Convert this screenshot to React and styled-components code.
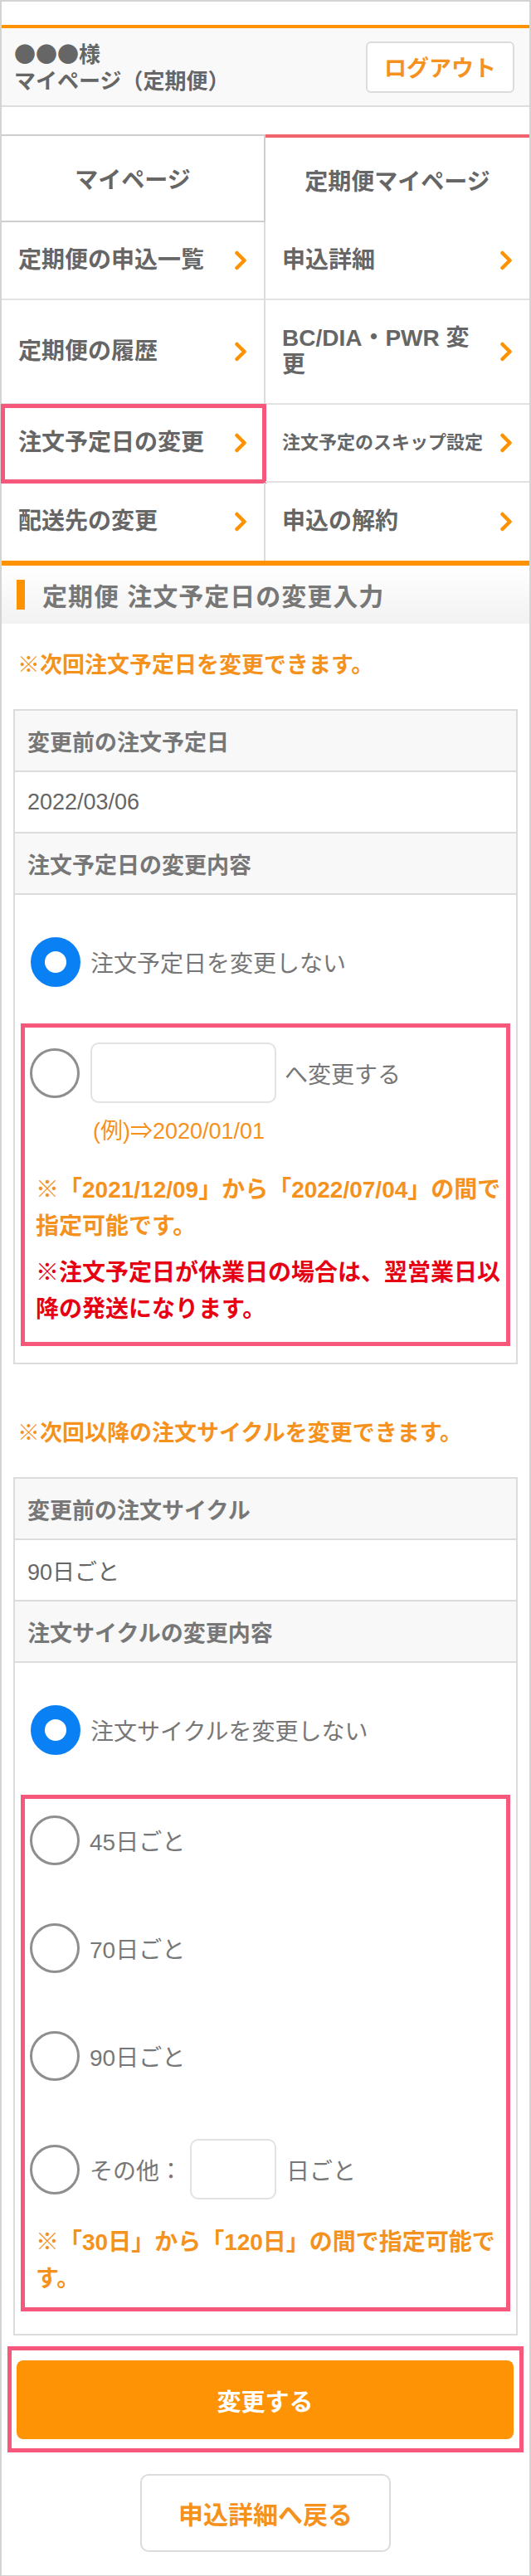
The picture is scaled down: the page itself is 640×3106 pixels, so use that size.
import React from "react";
import styled, { createGlobalStyle } from "styled-components";

const ORANGE = "#ff9200";
const ORANGE_TEXT = "#f5921e";
const PINK = "#f5587b";
const JP = `"Noto Sans CJK JP", sans-serif`;

const GlobalStyle = createGlobalStyle`
  * { box-sizing: border-box; }
  body {
    margin: 0;
    background: #fff;
    font-family: "Liberation Sans", "Noto Sans CJK JP", sans-serif;
    color: #666;
  }
`;

const Page = styled.div`
  width: 640px;
  border: 2px solid #d4d4d4;
  padding: 28px 0 28px;
`;

const Header = styled.header`
  height: 99px;
  border-top: 4px solid ${ORANGE};
  border-bottom: 2px solid #dedede;
  background: #f9f9f9;
  display: flex;
  align-items: center;
  justify-content: space-between;
  padding: 0 18px 0 15px;
`;

const UserName = styled.div`
  font-size: 26px;
  line-height: 32px;
  font-weight: bold;
  color: #666;
`;

const Dots = styled.span`
  font-family: ${JP};
`;

const LogoutButton = styled.button`
  width: 179px;
  height: 62px;
  background: #fff;
  border: 2px solid #dcdcdc;
  border-radius: 6px;
  color: ${ORANGE_TEXT};
  font-family: inherit;
  font-size: 27px;
  font-weight: bold;
  cursor: pointer;
`;

const Tabs = styled.div`
  margin-top: 33px;
  display: grid;
  grid-template-columns: 1fr 1fr;
  height: 106px;
`;

const Tab = styled.div`
  display: flex;
  align-items: center;
  justify-content: center;
  font-size: 28px;
  font-weight: bold;
  color: #666;
  background: #fff;
  border-top: ${(p) => (p.$active ? `4px solid #f0646e` : "2px solid #cfcfcf")};
  border-right: ${(p) => (p.$active ? "none" : "2px solid #cfcfcf")};
  border-bottom: ${(p) => (p.$active ? "none" : "2px solid #cfcfcf")};
`;

const Menu = styled.nav`
  display: grid;
  grid-template-columns: 1fr 1fr;
  border-bottom: 6px solid ${ORANGE};
`;

const MenuCell = styled.a`
  display: flex;
  align-items: center;
  justify-content: space-between;
  gap: 10px;
  padding: 30px 20px;
  min-height: 94px;
  border-bottom: 2px solid #e2e2e2;
  color: #666;
  text-decoration: none;
  font-size: ${(p) => (p.$small ? "22px" : "28px")};
  font-weight: bold;
  line-height: 32px;
  outline: ${(p) => (p.$current ? `5px solid ${PINK}` : "none")};
  outline-offset: -4px;

  &:nth-child(odd) {
    border-right: 2px solid #dcdcdc;
  }
  &:nth-last-child(-n + 2) {
    border-bottom: none;
  }
`;

const Chevron = () => (
  <svg width="16" height="24" viewBox="0 0 16 24" style={{ flexShrink: 0 }}>
    <path
      d="M3.5 3 L12.5 12 L3.5 21"
      fill="none"
      stroke={ORANGE}
      strokeWidth="4.5"
      strokeLinecap="round"
      strokeLinejoin="round"
    />
  </svg>
);

const SectionTitle = styled.h2`
  margin: 0;
  height: 70px;
  display: flex;
  align-items: center;
  gap: 21px;
  padding-left: 18px;
  background: linear-gradient(#ffffff, #f2f2f2);
  font-size: 30px;
  font-weight: bold;
  color: #777;
  letter-spacing: 1px;

  &::before {
    content: "";
    width: 10px;
    height: 36px;
    background: ${ORANGE};
  }
`;

const Content = styled.main`
  padding: 0 14px;
`;

const Notice = styled.p`
  margin: ${(p) => p.$mt}px 0 0 5px;
  font-size: 27px;
  line-height: 40px;
  font-weight: bold;
  color: ${ORANGE_TEXT};
`;

const Table = styled.div`
  margin-top: 33px;
  border: 2px solid #dcdcdc;
`;

const HeadCell = styled.div`
  height: 74px;
  display: flex;
  align-items: center;
  padding: 0 15px;
  background: #f8f8f8;
  border-bottom: 2px solid #dcdcdc;
  font-size: 27px;
  font-weight: bold;
  color: #777;
`;

const ValueCell = styled.div`
  height: 74px;
  display: flex;
  align-items: center;
  padding: 0 15px;
  border-bottom: 2px solid #dcdcdc;
  font-size: 27px;
  color: #666;
`;

const OptionCell = styled.div`
  padding: 0 7px ${(p) => p.$pb}px;
`;

const RadioRow = styled.label`
  display: flex;
  align-items: center;
  padding: ${(p) => p.$pt || 0}px 12px ${(p) => p.$pb || 0}px;
  font-size: 28px;
  color: #777;
`;

const InlineRow = styled.label`
  display: flex;
  align-items: center;
  font-size: 28px;
  color: #777;
`;

const Radio = styled.input.attrs({ type: "radio" })`
  appearance: none;
  margin: 0 12px 0 0;
  width: 60px;
  height: 60px;
  flex-shrink: 0;
  border-radius: 50%;
  border: 3px solid #8e8e8e;
  background: #fff;

  &:checked {
    border: 17px solid #0a80f5;
  }
`;

const TextBox = styled.input.attrs({ type: "text" })`
  width: ${(p) => p.$w}px;
  height: 73px;
  margin: 0 ${(p) => p.$mr}px 0 ${(p) => p.$ml}px;
  border: 2px solid #e2e2e2;
  border-radius: 10px;
  background: #fff;
  font-size: 26px;
`;

const PinkBox = styled.div`
  border: 5px solid ${PINK};
  padding: ${(p) => p.$pt}px 4px ${(p) => p.$pb}px 6px;
`;

const Example = styled.div`
  margin: 17px 0 0 76px;
  font-size: 27px;
  line-height: 34px;
  color: ${ORANGE_TEXT};
`;

const BoxNote = styled.p`
  margin: ${(p) => p.$mt}px 0 0 7px;
  font-size: 28px;
  line-height: 44px;
  font-weight: bold;
  color: ${(p) => (p.$red ? "#e60012" : ORANGE_TEXT)};
`;

const CycleList = styled.div`
  display: flex;
  flex-direction: column;
  gap: 70px;
`;

const SubmitFrame = styled.div`
  margin: 13px -7px 0;
  border: 5px solid ${PINK};
  padding: 12px 7px 11px 6px;
`;

const SubmitButton = styled.button`
  display: block;
  width: 100%;
  height: 95px;
  border: none;
  border-radius: 8px;
  background: #ff9306;
  color: #fff;
  font-family: inherit;
  font-size: 29px;
  font-weight: bold;
  cursor: pointer;
`;

const BackButton = styled.button`
  display: block;
  margin: 26px auto 0;
  width: 302px;
  height: 94px;
  border: 2px solid #dcdcdc;
  border-radius: 10px;
  background: #fff;
  color: ${ORANGE_TEXT};
  font-family: inherit;
  font-size: 30px;
  font-weight: bold;
  cursor: pointer;
`;

const menuItems = [
  { label: "定期便の申込一覧" },
  { label: "申込詳細" },
  { label: "定期便の履歴" },
  { label: <>BC/DIA・PWR 変<br />更</> },
  { label: "注文予定日の変更", current: true },
  { label: "注文予定のスキップ設定", small: true },
  { label: "配送先の変更" },
  { label: "申込の解約" },
];

const cycles = ["45日ごと", "70日ごと", "90日ごと"];

export default function App() {
  return (
    <>
      <GlobalStyle />
      <Page>
        <Header>
          <UserName>
            <Dots>●●●</Dots>様
            <br />
            マイページ（定期便）
          </UserName>
          <LogoutButton>ログアウト</LogoutButton>
        </Header>

        <Tabs>
          <Tab>マイページ</Tab>
          <Tab $active>定期便マイページ</Tab>
        </Tabs>

        <Menu>
          {menuItems.map((item, i) => (
            <MenuCell key={i} href="#" $current={item.current} $small={item.small}>
              <span>{item.label}</span>
              <Chevron />
            </MenuCell>
          ))}
        </Menu>

        <SectionTitle>定期便 注文予定日の変更入力</SectionTitle>

        <Content>
          <Notice $mt={30}>※次回注文予定日を変更できます。</Notice>
          <Table>
            <HeadCell>変更前の注文予定日</HeadCell>
            <ValueCell>2022/03/06</ValueCell>
            <HeadCell>注文予定日の変更内容</HeadCell>
            <OptionCell $pb={20}>
              <RadioRow $pt={51} $pb={44}>
                <Radio name="date" defaultChecked />
                注文予定日を変更しない
              </RadioRow>
              <PinkBox $pt={18} $pb={17}>
                <InlineRow>
                  <Radio name="date" />
                  <TextBox $w={224} $ml={1} $mr={10} />
                  へ変更する
                </InlineRow>
                <Example>(例)⇒2020/01/01</Example>
                <BoxNote $mt={32}>
                  ※「2021/12/09」から「2022/07/04」の間で指定可能です。
                </BoxNote>
                <BoxNote $mt={12} $red>
                  ※注文予定日が休業日の場合は、翌営業日以降の発送になります。
                </BoxNote>
              </PinkBox>
            </OptionCell>
          </Table>

          <Notice $mt={63}>※次回以降の注文サイクルを変更できます。</Notice>
          <Table>
            <HeadCell>変更前の注文サイクル</HeadCell>
            <ValueCell>90日ごと</ValueCell>
            <HeadCell>注文サイクルの変更内容</HeadCell>
            <OptionCell $pb={27}>
              <RadioRow $pt={51} $pb={48}>
                <Radio name="cycle" defaultChecked />
                注文サイクルを変更しない
              </RadioRow>
              <PinkBox $pt={20} $pb={12}>
                <CycleList>
                  {cycles.map((c) => (
                    <InlineRow key={c}>
                      <Radio name="cycle" />
                      {c}
                    </InlineRow>
                  ))}
                  <InlineRow>
                    <Radio name="cycle" />
                    その他：
                    <TextBox $w={104} $ml={9} $mr={12} />
                    日ごと
                  </InlineRow>
                </CycleList>
                <BoxNote $mt={30}>※「30日」から「120日」の間で指定可能です。</BoxNote>
              </PinkBox>
            </OptionCell>
          </Table>

          <SubmitFrame>
            <SubmitButton>変更する</SubmitButton>
          </SubmitFrame>
          <BackButton>申込詳細へ戻る</BackButton>
        </Content>
      </Page>
    </>
  );
}
